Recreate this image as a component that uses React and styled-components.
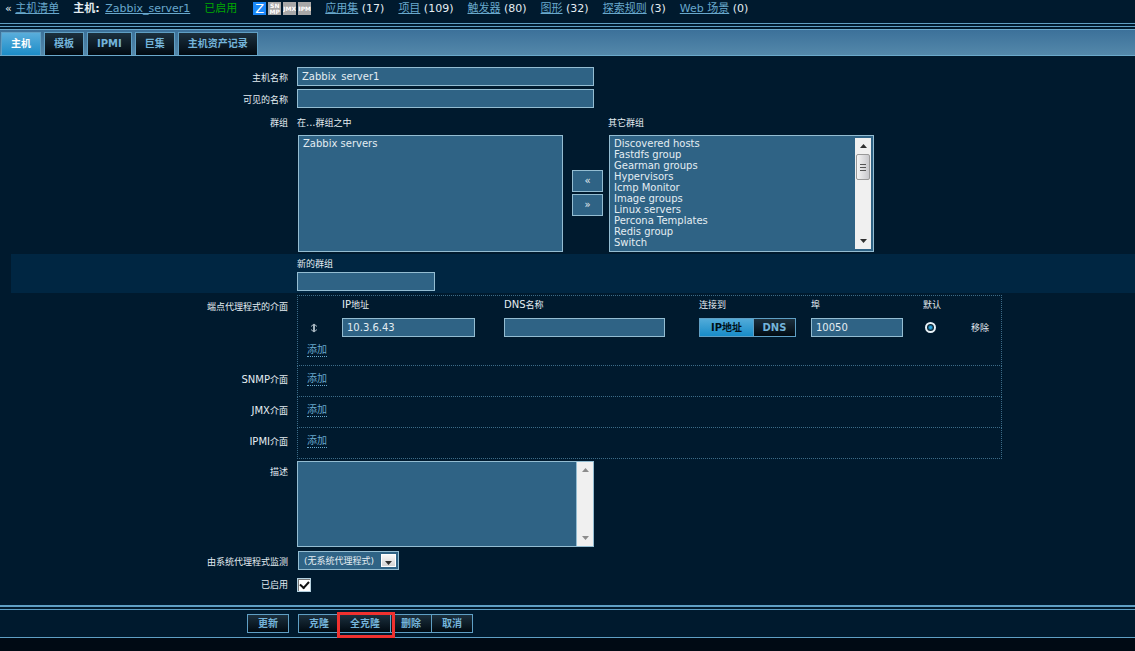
import React, { useState } from 'react';
import styled, { createGlobalStyle, css } from 'styled-components';

const colors = {
  page: '#001a2e',
  band: '#002642',
  field: '#2f6385',
  border: '#94bdd2',
  line: '#5f9fc4',
  link: '#68a8cc',
  text: '#e4edf2',
};

const GlobalStyle = createGlobalStyle`
  * {
    box-sizing: border-box;
  }

  body {
    margin: 0;
    background: #000a14;
    color: ${colors.text};
    font: 10px/12px "DejaVu Sans", "Noto Sans CJK SC", sans-serif;
  }

  button, input, select, textarea {
    margin: 0;
    font: inherit;
    color: inherit;
  }
`;

const Page = styled.form`
  background: ${colors.page};
  border-bottom: 1px solid ${colors.line};
`;

const HostBar = styled.nav`
  display: flex;
  align-items: center;
  height: 24px;
  padding: 0 5px 6px;
  font-size: 11px;
  line-height: 16px;
  white-space: nowrap;
  border-bottom: 1px solid ${colors.line};
`;

const HostItem = styled.span`
  margin-right: 14px;

  b {
    margin-right: 2px;
  }
`;

const BarLink = styled.a`
  color: ${colors.link};
  text-decoration: underline;
`;

const Status = styled.span`
  margin-right: 16px;
  color: #00a800;
`;

const Badges = styled.span`
  display: flex;
  gap: 2px;
  margin-right: 14px;
`;

const Badge = styled.span`
  display: flex;
  flex-direction: column;
  align-items: center;
  justify-content: center;
  width: 13px;
  height: 13px;
  overflow: hidden;
  background: ${props => (props.$on ? '#1a88f8' : '#a8a8a8')};
  color: #fff;
  font-size: ${props => (props.$on ? 13 : 6)}px;
  font-weight: ${props => (props.$on ? 400 : 700)};
  line-height: ${props => (props.$on ? 13 : 6)}px;
`;

const TabBar = styled.div`
  display: flex;
  align-items: flex-end;
  gap: 3px;
  height: 27px;
  margin-top: 2px;
  padding-left: 1px;
  background: linear-gradient(#3c719a, #5488aa);
  border-top: 1px solid #6ba9cb;
  border-bottom: 1px solid #6ba9cb;
`;

const Rule = styled.div`
  height: ${props => props.$size || 1}px;
  margin-top: 2px;
  background: ${colors.line};
`;

const darkFace = css`
  background: linear-gradient(#1c303e, #000a12);
  color: #74b4da;
`;

const Tab = styled.button`
  height: 23px;
  padding: 0 9px;
  border: 1px solid ${colors.line};
  border-bottom: 0;
  font-weight: 700;
  ${darkFace}
  ${props => props.$selected && css`
    background: linear-gradient(#5aaedb, #1c8dc8);
    color: #fff;
  `}
`;

const Form = styled.div`
  padding: 11px 0 11px 11px;
`;

const Row = styled.div`
  display: flex;
  min-height: ${props => props.$height || 0}px;
  background: ${props => (props.$band ? colors.band : 'transparent')};
`;

const label = css`
  flex: none;
  width: 277px;
  padding-top: ${props => (props.$drop === undefined ? 5 : props.$drop)}px;
  font-size: 9px;
  text-align: right;
`;

const Label = styled.label`
  ${label}
`;

const LabelText = styled.span`
  ${label}
`;

const Field = styled.div`
  flex: 1;
  min-width: 0;
  padding: ${props => props.$pad || '0'};
  margin-left: 9px;
`;

const Latin = styled.span`
  font-size: 10px;
`;

const TextInput = styled.input`
  display: block;
  width: ${props => props.$w}px;
  max-width: 100%;
  height: 19px;
  padding: 0 4px;
  border: 1px solid ${colors.border};
  background: ${colors.field};
  font-size: 10px;
  line-height: 17px;
`;

const Groups = styled.div`
  display: flex;
  align-items: flex-start;
`;

const Caption = styled.label`
  display: block;
  margin-bottom: ${props => (props.$tight ? 2 : 6)}px;
  font-size: 9px;
`;

const ListFrame = styled.div`
  display: flex;
  width: 265px;
  height: 117px;
  margin-left: 1px;
  border: 1px solid ${colors.border};
  background: ${colors.field};
`;

const List = styled.select`
  flex: 1;
  min-width: 0;
  padding: 2px 2px 0;
  overflow: hidden;
  border: 0;
  outline: 0;
  background: transparent;
  scrollbar-width: none;

  option {
    min-height: 11px;
    padding: 0 2px;
    line-height: 11px;
  }
`;

const Movers = styled.div`
  display: flex;
  flex-direction: column;
  gap: 2px;
  padding: 53px 5px 0 9px;
`;

const Mover = styled.button`
  width: 31px;
  height: 22px;
  padding: 0;
  border: 1px solid ${colors.border};
  background: ${colors.field};
`;

const ScrollTrack = styled.div`
  display: flex;
  flex-direction: column;
  align-items: center;
  width: 16px;
  margin: ${props => props.$inset || '0'};
  padding: 6px 0;
  background: #f0f0f0;
`;

const Thumb = styled.div`
  display: grid;
  place-items: center;
  width: 14px;
  height: 26px;
  margin-top: 6px;
  border: 1px solid #999;
  border-radius: 2px;
  background: linear-gradient(90deg, #f4f4f4, #c8c8cc);
`;

const Arrow = styled.svg`
  display: block;
  flex: none;
  width: 7px;
  height: 4px;
  margin-top: ${props => (props.$bottom ? 'auto' : 0)};
  fill: ${props => (props.$muted ? '#8c8c8c' : '#303030')};
`;

const Interfaces = styled.div`
  display: flow-root;
  width: 705px;
  max-width: 100%;
  border: 1px dotted #3c6c88;
  border-top-width: ${props => (props.$first ? 1 : 0)}px;
`;

const InterfaceTable = styled.table`
  width: 100%;
  table-layout: fixed;
  border-collapse: collapse;
  font-size: 9px;

  th {
    height: 17px;
    padding: 0;
    font-weight: 400;
    text-align: left;
  }

  td {
    height: 29px;
    padding: 0;
  }
`;

const TextButton = styled.button`
  padding: 0;
  border: 0;
  background: none;
  font-size: 9px;
`;

const AddLink = styled.button`
  display: block;
  height: 13px;
  margin: ${props => props.$m};
  padding: 0;
  border: 0;
  border-bottom: 1px dotted ${colors.link};
  background: none;
  color: ${colors.link};
  font-size: 10px;
`;

const Toggle = styled.div`
  display: flex;
  width: 97px;
`;

const ToggleOption = styled.label`
  display: grid;
  place-items: center;
  width: ${props => (props.$on ? 55 : 43)}px;
  height: 19px;
  border: 1px solid ${colors.line};
  font-size: 10px;
  font-weight: 700;
  ${darkFace}
  ${props => props.$on && css`
    background: linear-gradient(#52abd9, #188cc8);
    color: #001018;
  `}

  & + & {
    margin-left: -1px;
  }

  input {
    display: none;
  }
`;

const Radio = styled.input`
  display: block;
  appearance: none;
  width: 11px;
  height: 11px;
  margin: 0 0 0 2px;
  border: 2px solid #e8f2f8;
  border-radius: 50%;
  background: radial-gradient(#2aa4de 1px, #06202f 3px);
`;

const Sort = styled.svg`
  display: block;
  margin-left: 12px;
`;

const AreaFrame = styled.div`
  display: flex;
  width: 297px;
  max-width: 100%;
  height: 86px;
  border: 1px solid ${colors.border};
`;

const Area = styled.textarea`
  flex: 1;
  min-width: 0;
  border: 0;
  border-right: 1px solid ${colors.border};
  background: ${colors.field};
  overflow: hidden;
  resize: none;
`;

const SelectFrame = styled.div`
  display: inline-flex;
  align-items: center;
  height: 19px;
  margin-left: 1px;
  padding-right: 2px;
  border: 1px solid ${colors.border};
  background: ${colors.field};
`;

const Select = styled.select`
  appearance: none;
  height: 17px;
  width: 82px;
  padding: 0 0 0 5px;
  border: 0;
  background: transparent;
  font-size: 9px;
`;

const SelectArrow = styled.span`
  display: grid;
  place-items: center;
  width: 15px;
  height: 13px;
  padding-top: 4px;
  border: 1px solid #fff;
  background: linear-gradient(#f8f8f8, #d4d4d4);
`;

const Checkbox = styled.input`
  display: grid;
  place-items: center;
  appearance: none;
  width: 14px;
  height: 14px;
  border: 1px solid #b4d0de;
  background: #fff;
  box-shadow: inset 1px 1px 0 #777;

  &:checked::after {
    content: '';
    width: 7px;
    height: 4px;
    margin-bottom: 2px;
    border: solid #111;
    border-width: 0 0 2px 2px;
    transform: rotate(-48deg);
  }
`;

const Footer = styled.div`
  display: flex;
  gap: 9px;
  padding: 4px 0 4px 247px;
`;

const ButtonGroup = styled.div`
  display: flex;

  & > * + * {
    margin-left: -1px;
  }
`;

const ActionButton = styled.button`
  height: 19px;
  padding: 0 10px;
  border: 1px solid ${colors.line};
  font-weight: 700;
  line-height: 16px;
  ${darkFace}
`;

const Marked = styled.span`
  position: relative;
  display: flex;

  &::after {
    content: '';
    position: absolute;
    z-index: 1;
    inset: -2px -4px -5px -2px;
    border: 3px solid #f0312f;
    pointer-events: none;
  }
`;

const hostLinks = [
  ['应用集', 17],
  ['项目', 109],
  ['触发器', 80],
  ['图形', 32],
  ['探索规则', 3],
  ['Web 场景', 0],
];

const tabs = ['主机', '模板', 'IPMI', '巨集', '主机资产记录'];

const otherGroups = [
  'Discovered hosts',
  'Fastdfs group',
  'Gearman groups',
  'Hypervisors',
  'Icmp Monitor',
  'Image groups',
  'Linux servers',
  'Percona Templates',
  'Redis group',
  'Switch',
];

const Up = props => (
  <Arrow viewBox="0 0 7 4" {...props}><path d="M0 4 L3.5 0 L7 4 Z" /></Arrow>
);

const Down = props => (
  <Arrow viewBox="0 0 7 4" {...props}><path d="M0 0 H7 L3.5 4 Z" /></Arrow>
);

const HostNavigation = () => (
  <HostBar>
    <HostItem>« <BarLink href="#hosts">主机清单</BarLink></HostItem>
    <HostItem><b>主机:</b> <BarLink href="#host">Zabbix_server1</BarLink></HostItem>
    <Status>已启用</Status>
    <Badges>
      <Badge $on>Z</Badge>
      <Badge><span>SN</span><span>MP</span></Badge>
      <Badge>JMX</Badge>
      <Badge>IPM</Badge>
    </Badges>
    {hostLinks.map(([name, count]) => (
      <HostItem key={name}>
        <BarLink href={`#${name}`}>{name}</BarLink> ({count})
      </HostItem>
    ))}
  </HostBar>
);

const GroupPicker = () => (
  <Groups>
    <div>
      <Caption htmlFor="in-groups">在<Latin>...</Latin>群组之中</Caption>
      <ListFrame>
        <List id="in-groups" multiple>
          <option>Zabbix servers</option>
        </List>
      </ListFrame>
    </div>
    <Movers>
      <Mover type="button" aria-label="add group">«</Mover>
      <Mover type="button" aria-label="remove group">»</Mover>
    </Movers>
    <div>
      <Caption htmlFor="other-groups">其它群组</Caption>
      <ListFrame>
        <List id="other-groups" multiple>
          {otherGroups.map(name => <option key={name}>{name}</option>)}
        </List>
        <ScrollTrack $inset="2px">
          <Up />
          <Thumb>
            <svg width="6" height="7" stroke="#555"><path d="M0 .5H6M0 3.5H6M0 6.5H6" /></svg>
          </Thumb>
          <Down $bottom />
        </ScrollTrack>
      </ListFrame>
    </div>
  </Groups>
);

const AgentInterface = () => {
  const [target, setTarget] = useState('IP地址');
  return (
    <Interfaces $first>
      <InterfaceTable>
        <colgroup>
          <col width="44" />
          <col width="162" />
          <col width="195" />
          <col width="112" />
          <col width="112" />
          <col width="48" />
          <col />
        </colgroup>
        <thead>
          <tr>
            <th aria-label="order" />
            <th><Latin>IP</Latin>地址</th>
            <th><Latin>DNS</Latin>名称</th>
            <th>连接到</th>
            <th>埠</th>
            <th>默认</th>
            <th aria-label="actions" />
          </tr>
        </thead>
        <tbody>
          <tr>
            <td>
              <Sort width="8" height="10" fill="none" stroke="#a5b4be" aria-hidden="true">
                <path d="M3.5 1V9M4.5 1V9M1 3.5L4 1L7 3.5M1 6.5L4 9L7 6.5" />
              </Sort>
            </td>
            <td><TextInput $w={133} aria-label="IP地址" defaultValue="10.3.6.43" /></td>
            <td><TextInput $w={161} aria-label="DNS名称" /></td>
            <td>
              <Toggle>
                {['IP地址', 'DNS'].map(name => (
                  <ToggleOption key={name} $on={target === name}>
                    <input
                      type="radio"
                      name="useip"
                      checked={target === name}
                      onChange={() => setTarget(name)}
                    />
                    {name}
                  </ToggleOption>
                ))}
              </Toggle>
            </td>
            <td><TextInput $w={92} aria-label="埠" defaultValue="10050" /></td>
            <td><Radio type="radio" name="main" aria-label="默认" defaultChecked /></td>
            <td><TextButton type="button">移除</TextButton></td>
          </tr>
        </tbody>
      </InterfaceTable>
      <AddLink type="button" $m="2px 0 8px 9px">添加</AddLink>
    </Interfaces>
  );
};

const App = () => {
  const [tab, setTab] = useState(tabs[0]);
  return (
    <>
      <GlobalStyle />
      <Page onSubmit={e => e.preventDefault()}>
        <HostNavigation />
        <Rule />
        <TabBar role="tablist">
          {tabs.map(name => (
            <Tab
              key={name}
              type="button"
              role="tab"
              aria-selected={tab === name}
              $selected={tab === name}
              onClick={() => setTab(name)}
            >
              {name}
            </Tab>
          ))}
        </TabBar>
        <Form>
          <Row $height={22}>
            <Label htmlFor="name">主机名称</Label>
            <Field><TextInput id="name" $w={297} defaultValue="Zabbix_server1" /></Field>
          </Row>
          <Row $height={28}>
            <Label htmlFor="visible">可见的名称</Label>
            <Field><TextInput id="visible" $w={297} /></Field>
          </Row>
          <Row $height={137}>
            <LabelText $drop={0}>群组</LabelText>
            <Field><GroupPicker /></Field>
          </Row>
          <Row $height={39} $band>
            <LabelText />
            <Field $pad="4px 0 2px">
              <Caption htmlFor="new-group" $tight>新的群组</Caption>
              <TextInput id="new-group" $w={138} />
            </Field>
          </Row>
          <Row>
            <LabelText $drop={8}>端点代理程式的介面</LabelText>
            <Field $pad="2px 0 0"><AgentInterface /></Field>
          </Row>
          {['SNMP', 'JMX', 'IPMI'].map(name => (
            <Row key={name}>
              <LabelText $drop={8}><Latin>{name}</Latin>介面</LabelText>
              <Field>
                <Interfaces><AddLink type="button" $m="7px 0 10px 9px">添加</AddLink></Interfaces>
              </Field>
            </Row>
          ))}
          <Row $height={92}>
            <Label htmlFor="description" $drop={7}>描述</Label>
            <Field $pad="2px 0 0">
              <AreaFrame>
                <Area id="description" />
                <ScrollTrack><Up $muted /><Down $bottom $muted /></ScrollTrack>
              </AreaFrame>
            </Field>
          </Row>
          <Row $height={26}>
            <Label htmlFor="proxy">由系统代理程式监测</Label>
            <Field>
              <SelectFrame>
                <Select id="proxy"><option>(无系统代理程式)</option></Select>
                <SelectArrow><Down /></SelectArrow>
              </SelectFrame>
            </Field>
          </Row>
          <Row>
            <Label htmlFor="enabled" $drop={2}>已启用</Label>
            <Field $pad="1px 0 0"><Checkbox id="enabled" type="checkbox" defaultChecked /></Field>
          </Row>
        </Form>
        <Rule $size={2} />
        <Rule />
        <Footer>
          <ActionButton type="submit">更新</ActionButton>
          <ButtonGroup>
            <ActionButton type="button">克隆</ActionButton>
            <Marked><ActionButton type="button">全克隆</ActionButton></Marked>
            <ActionButton type="button">删除</ActionButton>
            <ActionButton type="button">取消</ActionButton>
          </ButtonGroup>
        </Footer>
      </Page>
    </>
  );
};

export default App;
